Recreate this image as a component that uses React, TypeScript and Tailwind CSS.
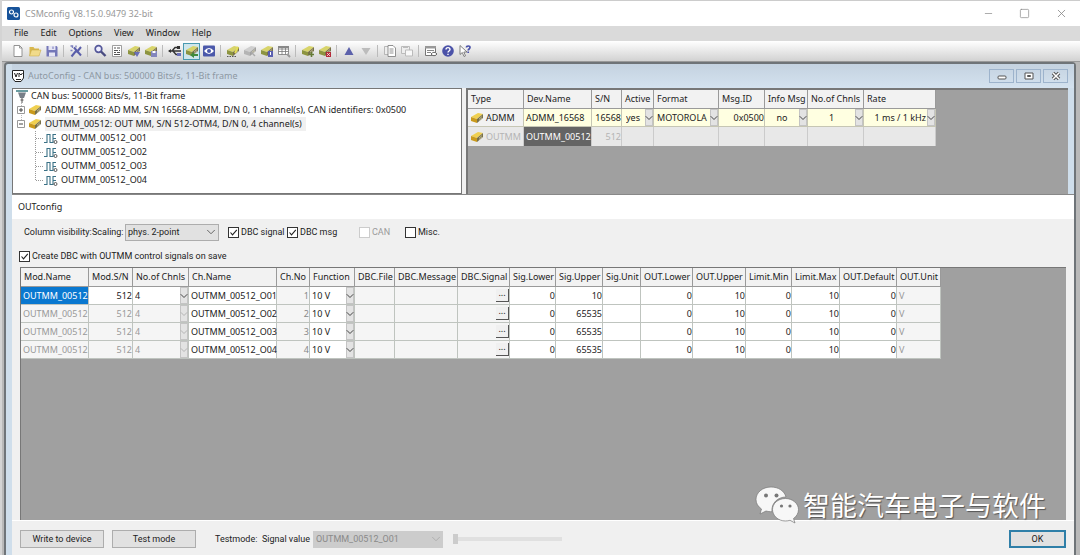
import type { ReactNode } from 'react'
import { ChevronDown, Minus, Square, X } from 'lucide-react'

const MENUS = ['File', 'Edit', 'Options', 'View', 'Window', 'Help']

const CHANNELS = ['OUTMM_00512_O01', 'OUTMM_00512_O02', 'OUTMM_00512_O03', 'OUTMM_00512_O04']

const DEVICE_COLS = [
  { label: 'Type', width: 56 },
  { label: 'Dev.Name', width: 68 },
  { label: 'S/N', width: 30 },
  { label: 'Active', width: 32 },
  { label: 'Format', width: 65 },
  { label: 'Msg.ID', width: 46 },
  { label: 'Info Msg', width: 43 },
  { label: 'No.of Chnls', width: 56 },
  { label: 'Rate', width: 72 },
]

const OUT_COLS = [
  { label: 'Mod.Name', width: 68 },
  { label: 'Mod.S/N', width: 44 },
  { label: 'No.of Chnls', width: 56 },
  { label: 'Ch.Name', width: 88 },
  { label: 'Ch.No', width: 33 },
  { label: 'Function', width: 45 },
  { label: 'DBC.File', width: 40 },
  { label: 'DBC.Message', width: 63 },
  { label: 'DBC.Signal', width: 52 },
  { label: 'Sig.Lower', width: 46 },
  { label: 'Sig.Upper', width: 47 },
  { label: 'Sig.Unit', width: 38 },
  { label: 'OUT.Lower', width: 52 },
  { label: 'OUT.Upper', width: 53 },
  { label: 'Limit.Min', width: 46 },
  { label: 'Limit.Max', width: 48 },
  { label: 'OUT.Default', width: 57 },
  { label: 'OUT.Unit', width: 44 },
]

const TOP_COLORS = { yellow: '#d8d46a', gold: '#f0d050', grey: '#cfcfcf' }
const SIDE_COLORS = { yellow: '#8d9440', gold: '#c99a1c', grey: '#b4b4b4' }

function Device({ tone = 'yellow', children }: { tone?: 'yellow' | 'gold' | 'grey'; children?: ReactNode }) {
  return (
    <svg viewBox="0 0 14 14" className="size-3.5 shrink-0">
      <path d="M1 6 8 2l5 1-6 5z" fill={TOP_COLORS[tone]} />
      <path d="M1 6l6 2v4l-6-2z" fill={SIDE_COLORS[tone]} />
      <path d="M7 8l6-5v4l-6 5z" fill={tone === 'grey' ? '#a0a0a0' : '#77704a'} />
      <path d="M9 8l3-2.500M9 9.500l3-2.500" stroke="#ddd6b0" strokeWidth=".6" />
      {children}
    </svg>
  )
}

function Icon({ children }: { children: ReactNode }) {
  return (
    <svg viewBox="0 0 14 14" fill="none" className="size-3.5 shrink-0">
      {children}
    </svg>
  )
}

const TOOLS: { name: string; icon: ReactNode; active?: boolean }[][] = [
  [
    { name: 'New', icon: <Icon><path d="M3 1.500h5.500L11 4v8.500H3z" fill="#fff" stroke="#888" strokeWidth=".9" /><path d="M8.500 1.500V4H11" stroke="#888" strokeWidth=".8" /></Icon> },
    { name: 'Open', icon: <Icon><path d="M1.500 12V3h4l1 1.500H11V12z" fill="#d9b84e" /><path d="M1.500 12l2-6H13l-2 6z" fill="#f1db8b" stroke="#c4a540" strokeWidth=".5" /></Icon> },
    { name: 'Save', icon: <Icon><path d="M1.500 2h10l1 1v9.500h-11z" fill="#7477b8" /><path d="M3.500 2h7v4h-7zM4 8.500h6v4H4z" fill="#e6e6f4" /><path d="M8 2.500v2.500" stroke="#7477b8" /></Icon> },
  ],
  [{ name: 'Auto setup', icon: <Icon><path d="M2.500 12.500 7 7M5 3.500l7 8M7.500 8.500 12 3" stroke="#5a5eaa" strokeWidth="2" /><path d="M1.500 2h2v2M1.500 6.500h2M7 1.500v2" stroke="#7c80bd" strokeWidth="1.400" /></Icon> }],
  [
    { name: 'Search', icon: <Icon><circle cx="5.500" cy="5" r="3.300" fill="#eef" stroke="#55589a" strokeWidth="1.700" /><path d="m8 7.500 4.500 4.500" stroke="#4a4c80" strokeWidth="2.400" /></Icon> },
    { name: 'Report', icon: <Icon><path d="M2.500 1.500h9v11h-9z" fill="#fff" stroke="#888" strokeWidth=".8" /><path d="M4 4h2M7 4h3M4 6.500h4M9 6.500h1M4 8.500h2M7 8.500h3M4 10.500h6" stroke="#555" /></Icon> },
    { name: 'Edit device', icon: <Device><path d="M7 8h6l-3 5z" fill="#6a6fb8" /></Device> },
    { name: 'Store device', icon: <Device><path d="M7 7h6v6H7z" fill="#8386bd" /><path d="M8.500 7h3v2h-3z" fill="#fff" /></Device> },
  ],
  [
    { name: 'USB', icon: <Icon><path d="M1 7h12M4 7l3-3.500h3M5 7l3 3.500h2" stroke="#333" strokeWidth="1.400" /><path d="M9 9h4v3H9z" fill="#6a6fb8" /><path d="M0 7l3-2v4zM9 2h3v3H9z" fill="#333" /></Icon> },
    { name: 'Online', icon: <Device><path d="m5 11 4-3v2h4v2H9v2z" fill="#3f8a3c" /></Device>, active: true },
    { name: 'Monitor', icon: <Icon><rect x="1" y="1.500" width="12" height="11" rx="1" fill="#4b58aa" /><path d="M2 7q5-6 10 0-5 6-10 0z" fill="#fff" /><circle cx="7" cy="7" r="2" fill="#4b58aa" /></Icon> },
  ],
  [
    { name: 'Configure', icon: <Device><path d="M9 9l3-6" stroke="#e5df55" strokeWidth="2" /><path d="M1 12.500h9" stroke="#555" strokeDasharray="1.500 1" /></Device> },
    { name: 'Disconnect', icon: <Device tone="grey"><path d="m8 8 4 4" stroke="#aaa" strokeWidth="1.500" /></Device> },
    { name: 'Device channels', icon: <Device><path d="M8 7h5v6H8z" fill="#5a5fb0" /><path d="M10.500 8v3" stroke="#fff" /></Device> },
    { name: 'Table', icon: <Icon><path d="M1.500 2.500h10v8h-10zM1.500 5h10M1.500 7.500h10M5 2.500v8M8.500 2.500v8" fill="#fff" stroke="#777" strokeWidth=".8" /><path d="M1 2h11v2H1z" fill="#888" /><path d="m10 10 3 3" stroke="#999" strokeWidth="2" /></Icon> },
  ],
  [
    { name: 'Add device', icon: <Device><path d="M10.500 8v5M8 10.500h5" stroke="#657b36" strokeWidth="1.600" /></Device> },
    { name: 'Remove device', icon: <Device><path d="M8 8h5v5H8z" fill="#b52a3a" /><path d="m9 9 3 3m0-3-3 3" stroke="#fff" strokeWidth=".7" /></Device> },
  ],
  [
    { name: 'Move up', icon: <Icon><path d="M7 3l4.500 8h-9z" fill="#5c61ab" /></Icon> },
    { name: 'Move down', icon: <Icon><path d="M7 11 2.500 4h9z" fill="#bcbcbc" /></Icon> },
  ],
  [
    { name: 'Copy', icon: <Icon><path d="M1.500 2.500h6v8h-6z" fill="#eee" stroke="#aaa" strokeWidth=".8" /><path d="M5 1.500h5l2.500 2.500v8.500H5z" fill="#fff" stroke="#777" strokeWidth=".8" /><path d="M6.500 5h4M6.500 7h4M6.500 9h4" stroke="#777" strokeWidth=".8" /></Icon> },
    { name: 'Paste', icon: <Icon><path d="M1.500 2.500h8v7h-8z" fill="#eee" stroke="#bbb" /><path d="M5.500 6h7v6h-7z" fill="#f8f8f8" stroke="#bbb" /><path d="M3 2h5v2H3z" fill="#bbb" /></Icon> },
  ],
  [
    { name: 'View settings', icon: <Icon><path d="M1.500 2.500h10v9h-10z" fill="#fff" stroke="#777" /><path d="M1 2h11v2.500H1z" fill="#999" /><path d="M3 6.500h7M3 8.500h4" stroke="#888" /><path d="M7 10q3-3.500 6 0-3 3.500-6 0z" fill="#fff" stroke="#666" /></Icon> },
    { name: 'Help', icon: <Icon><circle cx="7" cy="7" r="5.800" fill="#4b52a8" /><path d="M5 5.500C5 3 9 3 9 5.500 9 7 7 7 7 8.500M7 9.800v1.200" stroke="#fff" strokeWidth="1.400" /></Icon> },
    { name: 'Context help', icon: <Icon><path d="M2 1.500v9l2.300-2 1.700 4 1.500-.7-1.700-3.800H9z" fill="#fff" stroke="#666" strokeWidth=".8" /><path d="M8.500 3.500C8.500 1.500 12 1.500 12 3.500c0 1.500-1.800 1.500-1.800 3M10.200 7.500V9" stroke="#4b52a8" strokeWidth="1.700" /></Icon> },
  ],
]

function CellSelect({ label, value, disabled, className = '' }: { label: string; value: string; disabled?: boolean; className?: string }) {
  return (
    <div className="flex h-full">
      <select aria-label={label} disabled={disabled} className={`min-w-0 flex-1 appearance-none bg-transparent opacity-100 outline-none ${className}`}>
        <option>{value}</option>
      </select>
      <span className="flex w-2 shrink-0 items-center justify-center border border-[#c4c4c4] bg-[#e3e3e3]">
        <ChevronDown className={disabled ? 'size-3 shrink-0 text-[#b5b5b5]' : 'size-3 shrink-0 text-[#444]'} />
      </span>
    </div>
  )
}

function Check({ label, checked, disabled, className = '' }: { label: string; checked?: boolean; disabled?: boolean; className?: string }) {
  return (
    <label className={`flex items-center gap-0.5 whitespace-nowrap ${disabled ? 'text-[#9a9a9a]' : ''} ${className}`}>
      <span className="grid size-[11px] shrink-0">
        <input
          type="checkbox"
          defaultChecked={checked}
          disabled={disabled}
          className="peer col-start-1 row-start-1 size-[11px] appearance-none border border-[#333] bg-white disabled:border-[#ccc]"
        />
        <svg viewBox="0 0 11 11" fill="none" className="pointer-events-none col-start-1 row-start-1 hidden size-[11px] peer-checked:block">
          <path d="m2.500 5.500 2 2.300 4.300-5" stroke="#222" strokeWidth="1.100" />
        </svg>
      </span>
      {label}
    </label>
  )
}

function TreePane() {
  return (
    <div className="w-[450px] shrink-0 border border-[#777] bg-white pl-0.5">
      <ul className="text-[9px] leading-[14px] whitespace-nowrap">
        <li className="flex items-center gap-0.5">
          <Icon>
            <path d="M1 2h12" stroke="#367a80" strokeWidth="1.500" />
            <path d="M3 3.500h8L9 9H5z" fill="#777f88" />
            <path d="M7 9v5M5.500 11h3" stroke="#555" />
          </Icon>
          CAN bus: 500000 Bits/s, 11-Bit frame
        </li>
        <li className="flex items-center gap-[3px] pl-0.5">
          <Expander open={false} />
          <Device tone="gold" />
          ADMM_16568: AD MM, S/N 16568-ADMM, D/N 0, 1 channel(s), CAN identifiers: 0x0500
        </li>
        <li>
          <div className="flex items-center gap-[3px] pl-0.5">
            <Expander open />
            <Device tone="gold" />
            <span className="bg-[#f0f0f0] pr-1">OUTMM_00512: OUT MM, S/N 512-OTM4, D/N 0, 4 channel(s)</span>
          </div>
          <ul className="pl-5">
            {CHANNELS.map((name, i) => (
              <li key={name} className="flex h-[14px] items-center">
                <svg viewBox="0 0 26 14" fill="none" className="h-3.5 w-[26px] shrink-0">
                  <path d={i === CHANNELS.length - 1 ? 'M.5 0v7.500' : 'M.5 0v14'} stroke="#999" strokeDasharray="1 1" />
                  <path d="M1 7.500h8" stroke="#999" strokeDasharray="1 1" />
                  <path d="M9 11.500h3v-8h3v8h3v-8h3M18 7.500h3" stroke="#3a7186" strokeWidth="1.100" />
                  <circle cx="20.500" cy="11" r="1.500" stroke="#333" strokeWidth=".8" />
                </svg>
                {name}
              </li>
            ))}
          </ul>
        </li>
      </ul>
    </div>
  )
}

function Expander({ open }: { open: boolean }) {
  return (
    <svg viewBox="0 0 8 14" fill="none" className="h-3.5 w-2 shrink-0">
      <path d={open ? 'M4.500 0v4' : 'M4.500 0v14'} stroke="#bbb" strokeDasharray="1 1" />
      <path d="M.5 3.500h7v7h-7z" fill="#fff" stroke="#999" />
      <path d={open ? 'M2 7h4' : 'M2 7h4M4 5v4'} stroke="#444" />
    </svg>
  )
}

function HeadRow({ cols }: { cols: { label: string; width: number }[] }) {
  return (
    <>
      <colgroup>
        {cols.map((c) => (
          <col key={c.label} style={{ width: c.width }} />
        ))}
      </colgroup>
      <thead>
        <tr className="h-[19px] bg-[#f2f2f2]">
          {cols.map((c) => (
            <th key={c.label} className="border-r border-b border-[#9a9a9a] pl-[3px] text-left font-normal">
              {c.label}
            </th>
          ))}
        </tr>
      </thead>
    </>
  )
}

function DevicePane() {
  const total = DEVICE_COLS.reduce((sum, c) => sum + c.width, 0)
  return (
    <div className="min-w-0 flex-1 overflow-hidden border-2 border-r-0 border-b-0 border-[#777] bg-[#a0a0a0]">
      <table className="table-fixed border-separate border-spacing-0 text-[9px] leading-3 whitespace-nowrap" style={{ width: total }}>
        <HeadRow cols={DEVICE_COLS} />
        <tbody>
          <tr className="h-[18px] bg-[#ffffe1] *:h-[18px] *:border-r *:border-b *:border-[#c6c6b4]">
            <td className="bg-[#f2f2f2] pl-0.5">
              <span className="flex items-center gap-0.5"><Device tone="gold" />ADMM</span>
            </td>
            <td className="pl-0.5">ADMM_16568</td>
            <td className="text-right">16568</td>
            <td><CellSelect label="Active" value="yes" className="pl-1" /></td>
            <td><CellSelect label="Format" value="MOTOROLA" className="pl-[3px]" /></td>
            <td className="text-right">0x0500</td>
            <td><CellSelect label="Info Msg" value="no" className="[text-align-last:center]" /></td>
            <td><CellSelect label="No.of Chnls" value="1" className="[text-align-last:center]" /></td>
            <td><CellSelect label="Rate" value="1 ms / 1 kHz" className="pr-px [text-align-last:right]" /></td>
          </tr>
          <tr className="h-[19px] bg-[#e8e8e8] text-[#b4b4b4] *:h-[19px] *:border-r *:border-[#cbcbcb]">
            <td className="pl-0.5">
              <span className="flex items-center gap-0.5"><Device tone="gold" />OUTMM</span>
            </td>
            <td className="bg-[#646464] pl-0.5 text-white">OUTMM_00512</td>
            <td className="text-right">512</td>
            <td /><td /><td /><td /><td /><td />
          </tr>
        </tbody>
      </table>
    </div>
  )
}

function OutTable() {
  const total = OUT_COLS.reduce((sum, c) => sum + c.width, 0)
  return (
    <table className="table-fixed border-separate border-spacing-0 font-['Noto_Sans','Open_Sans',sans-serif] text-[9px] leading-3 whitespace-nowrap" style={{ width: total }}>
      <HeadRow cols={OUT_COLS} />
      <tbody>
        {CHANNELS.map((name, i) => {
          const first = i === 0
          return (
            <tr key={name} className="h-[18px] bg-white *:h-[18px] *:border-r *:border-b *:border-[#bfc4bf]">
              <td className={first ? 'bg-[#0a78d0] pl-0.5 text-white' : 'bg-[#f5f5f5] pl-0.5 text-[#999]'}>OUTMM_00512</td>
              <td className={first ? 'text-right' : 'bg-[#f5f5f5] text-right text-[#999]'}>512</td>
              <td className={first ? '' : 'bg-[#f5f5f5] text-[#999]'}>
                <CellSelect label={`No.of Chnls ${i + 1}`} value="4" disabled={!first} className="pl-0.5" />
              </td>
              <td className="pl-0.5">{name}</td>
              <td className="bg-[#f5f5f5] text-right text-[#888]">{i + 1}</td>
              <td><CellSelect label={`Function ${i + 1}`} value="10 V" className="pl-0.5" /></td>
              <td className="bg-[#f5f5f5]" />
              <td className="bg-[#f5f5f5]" />
              <td className="bg-[#f5f5f5]">
                <button aria-label={`Choose signal ${i + 1}`} className="ml-auto flex h-[13px] w-[13px] items-center justify-center border-r border-b border-[#555] bg-[#f0f0f0] pb-1">...</button>
              </td>
              <td className="text-right">0</td>
              <td className="text-right">{first ? '10' : '65535'}</td>
              <td />
              <td className="text-right">0</td>
              <td className="text-right">10</td>
              <td className="text-right">0</td>
              <td className="text-right">10</td>
              <td className="text-right">0</td>
              <td className="bg-[#f5f5f5] pl-0.5 text-[#999]">V</td>
            </tr>
          )
        })}
      </tbody>
    </table>
  )
}

function OutConfigDialog() {
  return (
    <section className="flex min-h-0 flex-1 flex-col border-t border-[#888] bg-[#f0f0f0] font-[Roboto,sans-serif] text-[9px] leading-3">
      <h2 className="flex h-6 shrink-0 items-center bg-white pl-1.5 font-['Noto_Sans','Open_Sans',sans-serif]">OUTconfig</h2>
      <div className="flex h-[26px] shrink-0 items-center pl-3 whitespace-nowrap">
        <span className="w-[68px]">Column visibility:</span>
        <label htmlFor="scaling" className="w-[33px]">Scaling:</label>
        <div className="mr-[9px] flex h-[17px] w-[94px] items-center border border-[#adadad] bg-[#e1e1e1]">
          <select id="scaling" className="min-w-0 flex-1 appearance-none bg-transparent pl-0.5 outline-none">
            <option>phys. 2-point</option>
          </select>
          <ChevronDown className="size-3.5 text-[#555]" strokeWidth={1.5} />
        </div>
        <Check label="DBC signal" checked className="w-[59px]" />
        <Check label="DBC msg" checked className="w-[72px]" />
        <Check label="CAN" disabled className="w-[46px]" />
        <Check label="Misc." />
      </div>
      <div className="flex h-[22px] shrink-0 items-center pl-[7px]">
        <Check label="Create DBC with OUTMM control signals on save" checked />
      </div>
      <div className="mx-2 min-h-0 flex-1 overflow-hidden border-t border-l border-[#777] bg-[#a0a0a0]">
        <OutTable />
      </div>
      <footer className="flex h-[35px] shrink-0 items-center border-t border-white px-2 pt-0.5 whitespace-nowrap">
        <button className="h-[18px] w-[84px] border border-[#adadad] bg-[#e1e1e1]">Write to device</button>
        <button className="ml-2 h-[18px] w-[84px] border border-[#adadad] bg-[#e1e1e1]">Test mode</button>
        <span className="ml-[19px] w-[47px]">Testmode:</span>
        <label htmlFor="signal" className="w-[51px]">Signal value</label>
        <div className="flex h-[17px] w-[130px] items-center bg-[#cccccc] text-[#8a8a8a]">
          <select id="signal" disabled className="min-w-0 flex-1 appearance-none bg-transparent pl-[3px] opacity-100">
            <option>OUTMM_00512_O01</option>
          </select>
          <ChevronDown className="size-3.5 text-[#aaa]" strokeWidth={1.5} />
        </div>
        <input
          type="range"
          aria-label="Signal value"
          disabled
          defaultValue={0}
          className="ml-2.5 h-3 w-[109px] appearance-none bg-transparent [&::-webkit-slider-runnable-track]:h-1 [&::-webkit-slider-runnable-track]:bg-[#e0e0e0] [&::-webkit-slider-thumb]:-mt-[3px] [&::-webkit-slider-thumb]:h-2.5 [&::-webkit-slider-thumb]:w-[5px] [&::-webkit-slider-thumb]:appearance-none [&::-webkit-slider-thumb]:bg-[#cccccc]"
        />
        <button className="ml-auto h-[18px] w-[57px] border-2 border-[#2f7fa8] bg-[#e1e1e1]">OK</button>
      </footer>
    </section>
  )
}

function Watermark() {
  return (
    <div className="pointer-events-none absolute right-[34px] bottom-[30px] flex items-center gap-1">
      <svg viewBox="0 0 44 40" className="h-10 w-11">
        <path d="M16 2C7.500 2 1 7.500 1 14.500c0 4 2 7 5.500 9.500L5 29l6-3c2 .5 3.500.7 6 .7C16 18 23 12 31 12 29.500 6 23.500 2 16 2z" fill="#f7f7f7" stroke="#777" strokeWidth=".7" />
        <path d="M30.500 13.500c-7.500 0-13 5-13 11s5.500 11.500 13 11.500c1.500 0 3-.3 4.500-.7l5 2.700-1.500-4.500c3-2 5-5.300 5-9 0-6-6-11-13-11z" fill="#f7f7f7" stroke="#777" strokeWidth=".7" />
        <g fill="#777">
          <circle cx="11" cy="10.500" r="2" />
          <circle cx="21.500" cy="10.500" r="2" />
          <circle cx="26.500" cy="21" r="1.600" />
          <circle cx="35" cy="21" r="1.600" />
        </g>
      </svg>
      <span className="font-['Noto_Sans_CJK_SC',sans-serif] text-[27px] leading-9 whitespace-nowrap text-white [text-shadow:1px_1px_1px_#555]">
        智能汽车电子与软件
      </span>
    </div>
  )
}

export default function App() {
  return (
    <div className="relative flex h-screen flex-col overflow-hidden border-l-2 border-[#d4d4d4] bg-[#b9b9b9] font-['Noto_Sans','Open_Sans',sans-serif] text-[#222]">
      <header className="flex h-[26px] shrink-0 items-center gap-[5px] border-t border-[#ccc] bg-white pl-[5px] text-[9px] text-[#999]">
        <svg viewBox="0 0 13 13" fill="none" className="size-[13px]">
          <rect width="13" height="13" rx="1.500" fill="#17539a" />
          <circle cx="4.500" cy="5" r="2" stroke="#fff" strokeWidth="1.200" />
          <circle cx="9" cy="8" r="2" stroke="#fff" strokeWidth="1.200" />
        </svg>
        <h1 className="flex-1">CSMconfig V8.15.0.9479 32-bit</h1>
        <div className="flex items-center gap-[25px] pr-3 text-[#888]">
          <button aria-label="Minimize"><Minus className="size-[11px]" strokeWidth={1.5} /></button>
          <button aria-label="Maximize"><Square className="size-[11px]" strokeWidth={1.5} /></button>
          <button aria-label="Close"><X className="size-[13px]" strokeWidth={1.5} /></button>
        </div>
      </header>

      <nav className="flex h-[15px] shrink-0 items-center gap-3 bg-[#dadada] pb-px pl-3 text-[9px] leading-3">
        {MENUS.map((m) => (
          <button key={m}>{m}</button>
        ))}
      </nav>

      <div className="flex h-[21px] shrink-0 items-center border-b border-[#999] bg-linear-to-b from-white to-[#d2d2d2] pl-[7px]">
        {TOOLS.map((group, g) => (
          <div key={group[0].name} className="flex items-center">
            {g > 0 && <span className="mx-[3px] h-3 w-px bg-[#bbb]" />}
            {group.map((t) => (
              <button
                key={t.name}
                aria-label={t.name}
                className={t.active ? 'flex h-[17px] w-[17px] items-center justify-center border border-[#4a9ab0] bg-[#cfe6ec]' : 'flex h-[17px] w-[17px] items-center justify-center'}
              >
                {t.icon}
              </button>
            ))}
          </div>
        ))}
      </div>

      <main className="mr-1 ml-0.5 flex min-h-0 flex-1 flex-col rounded-t border-2 border-b-0 border-[#6f7478] bg-[#cfdeeb] pl-1.5">
        <div className="flex h-6 shrink-0 items-center gap-1 bg-linear-to-b from-[#c4d2e0] to-[#d4e2ef] pr-1.5 text-[9px] text-[#8d98a3]">
          <svg viewBox="0 0 12 12" fill="none" className="size-3">
            <path d="M.5.500h11V8L9 11.500H3L.5 8z" fill="#fff" stroke="#222" />
            <path d="M2.500 3 4 7l1.500-4M7 7V3l2 2 1.500-2M4 9.500h5" stroke="#222" />
          </svg>
          <h2 className="flex-1">AutoConfig - CAN bus: 500000 Bits/s, 11-Bit frame</h2>
          <div className="flex gap-0.5">
            <button aria-label="Minimize window" className="flex h-3.5 w-[25px] items-center justify-center border border-[#9db3cc]">
              <Icon><rect x="3" y="7" width="8" height="3" rx="1" fill="#fff" stroke="#555" /></Icon>
            </button>
            <button aria-label="Restore window" className="flex h-3.5 w-[25px] items-center justify-center border border-[#9db3cc]">
              <Icon><path d="M3 4h8v6H3z" fill="#fff" stroke="#555" /><path d="M5.500 6.500h3v1h-3z" stroke="#555" /></Icon>
            </button>
            <button aria-label="Close window" className="flex h-3.5 w-[25px] items-center justify-center border border-[#9db3cc]">
              <Icon><path d="m4 4 6 6m0-6-6 6" stroke="#555" strokeWidth="3.500" /><path d="m4 4 6 6m0-6-6 6" stroke="#fff" strokeWidth="1.500" /></Icon>
            </button>
          </div>
        </div>
        <div className="mr-1.5 flex h-[106px] shrink-0 gap-1 bg-[#f0f0f0]">
          <TreePane />
          <DevicePane />
        </div>
        <OutConfigDialog />
      </main>
      <Watermark />
    </div>
  )
}
